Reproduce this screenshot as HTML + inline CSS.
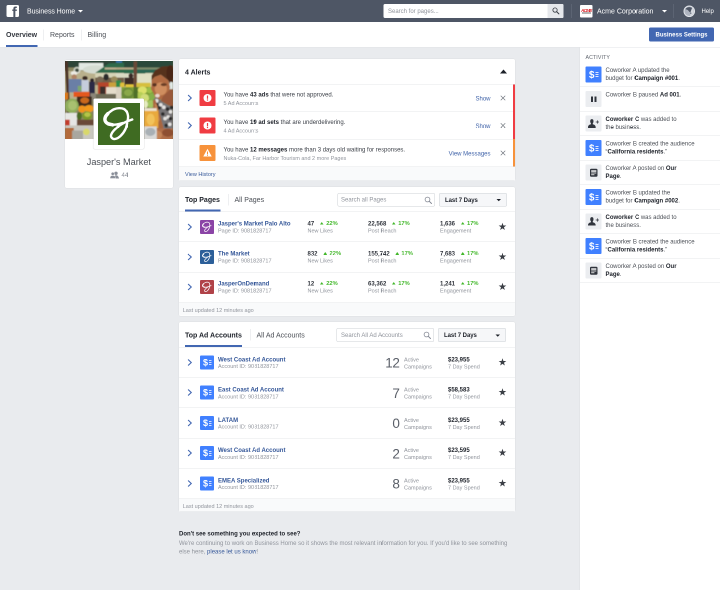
<!DOCTYPE html>
<html><head><meta charset="utf-8"><title>Business Home</title>
<style>
*{box-sizing:border-box;margin:0;padding:0}
html,body{width:720px;height:590px;overflow:hidden;background:#e9ebee}
body{font-family:"Liberation Sans",Arial,sans-serif;color:#1d2129}
#w{position:absolute;left:0;top:0;width:1440px;height:1180px;transform:scale(.5);transform-origin:0 0;will-change:transform;background:#e9ebee;overflow:hidden}
.abs{position:absolute}
.card{position:absolute;background:#fff;border:1px solid #dddfe2;border-radius:4px;overflow:hidden}
.t{position:absolute;white-space:nowrap}
.t b{font-weight:bold;color:#1d2129}
svg{position:absolute;overflow:visible}
</style></head><body><div id="w">
<div class="abs" style="left:0px;top:0px;width:1440px;height:44px;background:#4e5665"></div>
<div class="abs" style="left:12.5px;top:10px;width:25px;height:24px;background:#fff;border-radius:3px;overflow:hidden"><div class="t" style="left:11.5px;top:-0.5px;font-size:29px;line-height:30px;font-weight:bold;color:#4e5665;">f</div></div>
<div class="t" style="left:54px;top:14.1px;font-size:14px;line-height:16.8px;color:#fff;font-weight:normal;letter-spacing:-0.15px">Business Home</div>
<svg style="left:156px;top:20px" width="10" height="5"><path d="M0 0h10l-5 5z" fill="#fff"/></svg>
<div class="abs" style="left:767px;top:8px;width:360px;height:28px;background:#fff;border-radius:3px"></div>
<div class="abs" style="left:1095px;top:8px;width:32px;height:28px;background:#e6e8ec;border-radius:0 3px 3px 0"></div>
<div class="t" style="left:776px;top:14.8px;font-size:12px;line-height:14.4px;color:#90949c;font-weight:normal;">Search for pages...</div>
<svg style="left:1104px;top:14px" width="15.500" height="15.500" viewBox="0 0 18 18"><circle cx="7" cy="7" r="5" fill="none" stroke="#3a3e46" stroke-width="1.900"/><path d="M11 11l5 5" stroke="#3a3e46" stroke-width="2.400" stroke-linecap="round"/></svg>
<div class="abs" style="left:1143px;top:8px;width:1px;height:28px;background:#6a7180"></div>
<div class="abs" style="left:1160px;top:10px;width:25px;height:25px;background:#fff;border-radius:2px"></div>
<div class="t" style="left:1162px;top:15.6px;font-size:9px;line-height:10.8px;color:#d81f26;font-weight:bold;letter-spacing:-1.35px;font-style:italic">ACME</div>
<div class="abs" style="left:1164px;top:25.2px;width:18px;height:1.5px;background:#6b6b6b"></div>
<div class="t" style="left:1194px;top:14.1px;font-size:14px;line-height:16.8px;color:#fff;font-weight:normal;">Acme Corporation</div>
<svg style="left:1324px;top:20px" width="10" height="5"><path d="M0 0h10l-5 5z" fill="#fff"/></svg>
<div class="abs" style="left:1347px;top:8px;width:1px;height:28px;background:#6a7180"></div>
<svg style="left:1366.500px;top:10.500px" width="23" height="23" viewBox="0 0 24 24"><circle cx="12" cy="12" r="11" fill="#aeb4c0" stroke="#e2e5ea" stroke-width="2"/><path d="M4 7.500C7 3 13 2 18 5l-3.500 9.500-2.500-1.500-3-3.500z" fill="#4e5665"/><path d="M18 5c4 3 4.500 9 1.500 13-2 2.500-4.500 3.300-5.500 3l.5-6.500z" fill="#d5d8df"/><path d="M14.500 14.500l2 .5-.5 3-1.800-1z" fill="#4e5665"/></svg>
<div class="t" style="left:1403px;top:14.8px;font-size:12px;line-height:14.4px;color:#fff;font-weight:normal;">Help</div>
<div class="abs" style="left:0px;top:44px;width:1440px;height:51px;background:#fff;border-bottom:1px solid #e1e3e6"></div>
<div class="t" style="left:12px;top:60.6px;font-size:14px;line-height:16.8px;color:#33373f;font-weight:bold;">Overview</div>
<div class="abs" style="left:87px;top:59px;width:1px;height:22px;background:#dddfe2"></div>
<div class="t" style="left:100px;top:60.6px;font-size:14px;line-height:16.8px;color:#4b4f56;font-weight:normal;">Reports</div>
<div class="abs" style="left:163px;top:59px;width:1px;height:22px;background:#dddfe2"></div>
<div class="t" style="left:175px;top:60.6px;font-size:14px;line-height:16.8px;color:#4b4f56;font-weight:normal;">Billing</div>
<div class="abs" style="left:12px;top:90px;width:63px;height:4px;background:#4267b2"></div>
<div class="abs" style="left:1298px;top:55px;width:130px;height:28px;background:#4267b2;border-radius:3px"></div>
<div class="t" style="left:1311px;top:61.8px;font-size:12px;line-height:14.4px;color:#fff;font-weight:bold;">Business Settings</div>
<div class="abs" style="left:1159px;top:95px;width:281px;height:1085px;background:#fff;border-left:1px solid #dddfe2"></div>
<div class="t" style="left:1171px;top:108.2px;font-size:10.5px;line-height:12.6px;color:#5f646d;font-weight:normal;letter-spacing:0.2px">ACTIVITY</div>
<div class="abs" style="left:1171px;top:133px;width:32px;height:32px;background:#4080ff;border-radius:2px"></div>
<div class="t" style="left:1178px;top:138.3px;font-size:19.5px;line-height:23.4px;color:#fff;font-weight:bold;">$</div>
<div class="abs" style="left:1191px;top:144px;width:5.5px;height:2px;background:#dfe8ff"></div>
<div class="abs" style="left:1191px;top:148px;width:5.5px;height:2px;background:#dfe8ff"></div>
<div class="abs" style="left:1191px;top:152px;width:5.5px;height:2px;background:#dfe8ff"></div>
<div class="t" style="left:1211px;top:132.8px;font-size:12px;line-height:14.4px;color:#4b4f56;font-weight:normal;">Coworker A updated the</div>
<div class="t" style="left:1211px;top:148.8px;font-size:12px;line-height:14.4px;color:#4b4f56;font-weight:normal;">budget for <b>Campaign #001</b>.</div>
<div class="abs" style="left:1160px;top:173px;width:280px;height:1px;background:#e5e6e9"></div>
<div class="abs" style="left:1171px;top:182px;width:32px;height:32px;background:#ebedf0;border-radius:2px"></div>
<div class="abs" style="left:1182px;top:192.5px;width:4px;height:11.5px;background:#30343c"></div>
<div class="abs" style="left:1188.5px;top:192.5px;width:4px;height:11.5px;background:#30343c"></div>
<div class="t" style="left:1211px;top:181.8px;font-size:12px;line-height:14.4px;color:#4b4f56;font-weight:normal;">Coworker B paused <b>Ad 001</b>.</div>
<div class="abs" style="left:1160px;top:222px;width:280px;height:1px;background:#e5e6e9"></div>
<div class="abs" style="left:1171px;top:231px;width:32px;height:32px;background:#ebedf0;border-radius:2px"></div>
<svg style="left:1176px;top:238px" width="23.100" height="17.600" viewBox="0 0 21 16"><ellipse cx="7" cy="4.200" rx="3" ry="4" fill="#30343c"/><path d="M5.300 6h3.400v3.500c3.500.8 5.300 2.500 5.300 6h-14c0-3.500 1.800-5.200 5.300-6z" fill="#30343c"/><path d="M17 2.500v6M14 5.500h6" stroke="#30343c" stroke-width="1.300"/></svg>
<div class="t" style="left:1211px;top:230.8px;font-size:12px;line-height:14.4px;color:#4b4f56;font-weight:normal;"><b>Coworker C</b> was added to</div>
<div class="t" style="left:1211px;top:246.8px;font-size:12px;line-height:14.4px;color:#4b4f56;font-weight:normal;">the business.</div>
<div class="abs" style="left:1160px;top:271px;width:280px;height:1px;background:#e5e6e9"></div>
<div class="abs" style="left:1171px;top:280px;width:32px;height:32px;background:#4080ff;border-radius:2px"></div>
<div class="t" style="left:1178px;top:285.3px;font-size:19.5px;line-height:23.4px;color:#fff;font-weight:bold;">$</div>
<div class="abs" style="left:1191px;top:292px;width:5.5px;height:2px;background:#dfe8ff"></div>
<div class="abs" style="left:1191px;top:296px;width:5.5px;height:2px;background:#dfe8ff"></div>
<div class="abs" style="left:1191px;top:300px;width:5.5px;height:2px;background:#dfe8ff"></div>
<div class="t" style="left:1211px;top:279.8px;font-size:12px;line-height:14.4px;color:#4b4f56;font-weight:normal;">Coworker B created the audience</div>
<div class="t" style="left:1211px;top:295.8px;font-size:12px;line-height:14.4px;color:#4b4f56;font-weight:normal;">“<b>California residents</b>.”</div>
<div class="abs" style="left:1160px;top:320px;width:280px;height:1px;background:#e5e6e9"></div>
<div class="abs" style="left:1171px;top:329px;width:32px;height:32px;background:#ebedf0;border-radius:2px"></div>
<svg style="left:1179.5px;top:337.5px" width="15" height="15" viewBox="0 0 14 14"><rect x="0" y="-0.500" width="14" height="15" rx="2.200" fill="#30343c"/><rect x="2.200" y="2.500" width="9.600" height="2.600" fill="#fff"/><rect x="2.200" y="6.700" width="9.600" height="1.500" fill="#fff"/><rect x="2.200" y="10" width="6" height="1.500" fill="#fff"/></svg>
<div class="t" style="left:1211px;top:328.8px;font-size:12px;line-height:14.4px;color:#4b4f56;font-weight:normal;">Coworker A posted on <b>Our</b></div>
<div class="t" style="left:1211px;top:344.8px;font-size:12px;line-height:14.4px;color:#4b4f56;font-weight:normal;"><b>Page</b>.</div>
<div class="abs" style="left:1160px;top:369px;width:280px;height:1px;background:#e5e6e9"></div>
<div class="abs" style="left:1171px;top:378px;width:32px;height:32px;background:#4080ff;border-radius:2px"></div>
<div class="t" style="left:1178px;top:383.3px;font-size:19.5px;line-height:23.4px;color:#fff;font-weight:bold;">$</div>
<div class="abs" style="left:1191px;top:390px;width:5.5px;height:2px;background:#dfe8ff"></div>
<div class="abs" style="left:1191px;top:394px;width:5.5px;height:2px;background:#dfe8ff"></div>
<div class="abs" style="left:1191px;top:398px;width:5.5px;height:2px;background:#dfe8ff"></div>
<div class="t" style="left:1211px;top:377.8px;font-size:12px;line-height:14.4px;color:#4b4f56;font-weight:normal;">Coworker B updated the</div>
<div class="t" style="left:1211px;top:393.8px;font-size:12px;line-height:14.4px;color:#4b4f56;font-weight:normal;">budget for <b>Campaign #002</b>.</div>
<div class="abs" style="left:1160px;top:418px;width:280px;height:1px;background:#e5e6e9"></div>
<div class="abs" style="left:1171px;top:427px;width:32px;height:32px;background:#ebedf0;border-radius:2px"></div>
<svg style="left:1176px;top:434px" width="23.100" height="17.600" viewBox="0 0 21 16"><ellipse cx="7" cy="4.200" rx="3" ry="4" fill="#30343c"/><path d="M5.300 6h3.400v3.500c3.500.8 5.300 2.500 5.300 6h-14c0-3.500 1.800-5.200 5.300-6z" fill="#30343c"/><path d="M17 2.500v6M14 5.500h6" stroke="#30343c" stroke-width="1.300"/></svg>
<div class="t" style="left:1211px;top:426.8px;font-size:12px;line-height:14.4px;color:#4b4f56;font-weight:normal;"><b>Coworker C</b> was added to</div>
<div class="t" style="left:1211px;top:442.8px;font-size:12px;line-height:14.4px;color:#4b4f56;font-weight:normal;">the business.</div>
<div class="abs" style="left:1160px;top:467px;width:280px;height:1px;background:#e5e6e9"></div>
<div class="abs" style="left:1171px;top:476px;width:32px;height:32px;background:#4080ff;border-radius:2px"></div>
<div class="t" style="left:1178px;top:481.3px;font-size:19.5px;line-height:23.4px;color:#fff;font-weight:bold;">$</div>
<div class="abs" style="left:1191px;top:488px;width:5.5px;height:2px;background:#dfe8ff"></div>
<div class="abs" style="left:1191px;top:492px;width:5.5px;height:2px;background:#dfe8ff"></div>
<div class="abs" style="left:1191px;top:496px;width:5.5px;height:2px;background:#dfe8ff"></div>
<div class="t" style="left:1211px;top:475.8px;font-size:12px;line-height:14.4px;color:#4b4f56;font-weight:normal;">Coworker B created the audience</div>
<div class="t" style="left:1211px;top:491.8px;font-size:12px;line-height:14.4px;color:#4b4f56;font-weight:normal;">“<b>California residents</b>.”</div>
<div class="abs" style="left:1160px;top:516px;width:280px;height:1px;background:#e5e6e9"></div>
<div class="abs" style="left:1171px;top:525px;width:32px;height:32px;background:#ebedf0;border-radius:2px"></div>
<svg style="left:1179.5px;top:533.5px" width="15" height="15" viewBox="0 0 14 14"><rect x="0" y="-0.500" width="14" height="15" rx="2.200" fill="#30343c"/><rect x="2.200" y="2.500" width="9.600" height="2.600" fill="#fff"/><rect x="2.200" y="6.700" width="9.600" height="1.500" fill="#fff"/><rect x="2.200" y="10" width="6" height="1.500" fill="#fff"/></svg>
<div class="t" style="left:1211px;top:524.8px;font-size:12px;line-height:14.4px;color:#4b4f56;font-weight:normal;">Coworker A posted on <b>Our</b></div>
<div class="t" style="left:1211px;top:540.8px;font-size:12px;line-height:14.4px;color:#4b4f56;font-weight:normal;"><b>Page</b>.</div>
<div class="abs" style="left:1160px;top:565px;width:280px;height:1px;background:#e5e6e9"></div>
<div class="card" style="left:129px;top:119px;width:218px;height:258px">
<div class="abs" style="left:0;top:2px;width:216px;height:156px;background:#6b6a45;overflow:hidden"><svg width="216" height="156" viewBox="0 0 108 78" preserveAspectRatio="none"><defs><filter id="bl" x="-5%" y="-5%" width="110%" height="110%"><feGaussianBlur stdDeviation="0.55"/></filter><clipPath id="cp"><rect width="108" height="78"/></clipPath></defs><g clip-path="url(#cp)"><g filter="url(#bl)"><rect x="0" y="0" width="108" height="78" fill="#8a8660"/><rect x="-1.0" y="9.9" width="60.0" height="28.5" fill="#b9b08c"/><rect x="51.0" y="11.2" width="57.0" height="14.9" fill="#cfcdb0"/><rect x="-1.0" y="-1.0" width="60.0" height="7.5" fill="#2f4538"/><rect x="51.0" y="-1.0" width="57.0" height="7.9" fill="#2b4a3a"/><rect x="13.9" y="2.0" width="24.4" height="7.2" fill="#e3e9e3"/><ellipse cx="30.2" cy="8.5" rx="12.2" ry="4.1" fill="#d5dcd2"/><polygon points="30.2,11.9 43.8,2.4 59.0,1.7 59.0,11.9" fill="#2f6a4c"/><rect x="39.7" y="6.5" width="19.3" height="2.0" fill="#b9ad8e"/><rect x="51.0" y="6.5" width="44.8" height="2.0" fill="#b3a685"/><rect x="51.0" y="8.5" width="29.2" height="4.1" fill="#2a6b4c"/><rect x="51.0" y="0.1" width="6.1" height="1.6" fill="#3a78b5"/><rect x="72.0" y="6.5" width="23.7" height="2.0" fill="#7c8a6a"/><rect x="72.0" y="8.5" width="19.7" height="3.4" fill="#2c6652"/><rect x="30.2" y="11.9" width="28.8" height="6.1" fill="#d6d3b6"/><rect x="51.0" y="12.3" width="17.6" height="5.7" fill="#d9dac4"/><rect x="72.0" y="12.6" width="14.9" height="10.2" fill="#dfe0c4"/><rect x="104.6" y="19.4" width="3.4" height="8.8" fill="#dfe8e6"/><polygon points="-0.2,0.1 2.8,0.1 6.6,79.1 3.6,79.1" fill="#4c3226"/><ellipse cx="12.0" cy="9.3" rx="3.5" ry="3.5" fill="#dfe3dc" opacity="0.8"/><ellipse cx="12.0" cy="9.3" rx="1.9" ry="1.9" fill="#3c4a3c"/><ellipse cx="9.0" cy="12.2" rx="3.3" ry="2.0" fill="#ecebe4"/><ellipse cx="9.2" cy="16.0" rx="2.7" ry="2.7" fill="#b08465"/><rect x="3.7" y="18.0" width="12.9" height="13.3" fill="#6a7fa6"/><rect x="12.8" y="24.8" width="7.3" height="5.4" fill="#7fa86c"/><ellipse cx="20.0" cy="17.2" rx="2.7" ry="2.2" fill="#3a2a22"/><rect x="16.6" y="19.1" width="7.1" height="11.4" fill="#c5ccdb"/><ellipse cx="27.1" cy="19.4" rx="2.0" ry="2.0" fill="#2a2228"/><rect x="24.1" y="20.7" width="5.8" height="17.6" fill="#2c2a45"/><rect x="30.2" y="16.6" width="28.8" height="7.5" fill="#6f5f48"/><ellipse cx="35.0" cy="18.3" rx="3.4" ry="3.1" fill="#7a6a55"/><ellipse cx="41.1" cy="16.0" rx="2.7" ry="3.4" fill="#2c2a2a"/><ellipse cx="49.2" cy="18.3" rx="3.4" ry="3.1" fill="#9a8a5a"/><rect x="32.9" y="21.4" width="13.6" height="11.5" fill="#b5452b"/><rect x="35.0" y="25.5" width="5.4" height="10.2" fill="#3a2f2c"/><rect x="41.1" y="26.1" width="17.9" height="8.4" fill="#e4dccb"/><rect x="43.8" y="21.4" width="15.2" height="4.7" fill="#c9a13a"/><rect x="52.6" y="19.4" width="3.4" height="6.8" fill="#2f8a4a"/><rect x="29.9" y="32.9" width="29.0" height="5.4" fill="#6d6a55"/><rect x="25.5" y="32.2" width="5.4" height="7.5" fill="#8b8578"/><rect x="8.5" y="30.9" width="16.0" height="5.0" fill="#e5591c"/><rect x="11.9" y="35.6" width="14.9" height="9.5" fill="#3d2a1c"/><ellipse cx="19.7" cy="39.4" rx="4.4" ry="3.1" fill="#c9671f"/><ellipse cx="17.0" cy="48.1" rx="3.7" ry="3.6" fill="#f0941c"/><ellipse cx="24.1" cy="47.6" rx="4.7" ry="3.6" fill="#f29a1e"/><rect x="-1.0" y="31.6" width="4.1" height="6.8" fill="#d9791f"/><ellipse cx="6.9" cy="44.9" rx="6.8" ry="7.3" fill="#8fae5c"/><ellipse cx="7.5" cy="44.5" rx="4.4" ry="4.7" fill="#a9c06f"/><rect x="-0.2" y="51.9" width="12.2" height="15.6" fill="#e6e6e4"/><rect x="0.1" y="58.7" width="4.6" height="8.1" fill="#c23a2b"/><ellipse cx="14.3" cy="55.0" rx="2.6" ry="4.0" fill="#4b6b28"/><ellipse cx="22.1" cy="54.7" rx="5.0" ry="4.4" fill="#7c9a2a"/><ellipse cx="22.4" cy="53.6" rx="3.1" ry="2.4" fill="#b5c548"/><rect x="11.9" y="58.7" width="16.7" height="5.7" fill="#6b4a38"/><rect x="0.1" y="64.4" width="28.5" height="14.7" fill="#c9c7bf"/><rect x="0.1" y="66.8" width="8.7" height="12.2" fill="#b36a3a"/><ellipse cx="21.4" cy="70.9" rx="3.4" ry="3.4" fill="#d9d86a"/><rect x="7.1" y="69.6" width="10.9" height="9.5" fill="#a9a79f"/><rect x="68.6" y="0.4" width="3.4" height="37.6" fill="#6a4a38"/><ellipse cx="65.9" cy="14.8" rx="2.4" ry="2.5" fill="#3a2a25"/><rect x="59.4" y="16.6" width="9.2" height="8.8" fill="#3b2b27"/><rect x="51.0" y="19.4" width="4.1" height="6.8" fill="#2f8a4a"/><rect x="55.1" y="22.1" width="4.3" height="4.1" fill="#e0c13a"/><rect x="60.5" y="23.4" width="8.1" height="4.3" fill="#e6c63a"/><rect x="71.4" y="21.8" width="14.2" height="4.3" fill="#d6bf3c"/><rect x="51.0" y="26.1" width="5.7" height="11.8" fill="#d9d1c1"/><rect x="56.4" y="26.1" width="33.9" height="20.4" fill="#7f9f38"/><ellipse cx="62.5" cy="32.6" rx="6.1" ry="5.8" fill="#6a8a3a"/><ellipse cx="63.2" cy="31.6" rx="4.1" ry="3.4" fill="#8aa848"/><ellipse cx="77.5" cy="29.2" rx="4.7" ry="3.7" fill="#dbe16a"/><ellipse cx="84.6" cy="29.2" rx="3.1" ry="3.1" fill="#9cbf4a"/><ellipse cx="75.1" cy="34.3" rx="3.7" ry="3.4" fill="#b7cf58"/><ellipse cx="79.8" cy="37.0" rx="4.4" ry="4.1" fill="#cfdc78"/><ellipse cx="87.0" cy="35.6" rx="3.4" ry="3.4" fill="#86b04a"/><ellipse cx="85.9" cy="42.9" rx="3.7" ry="3.9" fill="#a3c660"/><ellipse cx="80.5" cy="43.4" rx="2.4" ry="3.7" fill="#e6ecc0"/><rect x="68.6" y="26.1" width="4.1" height="11.5" fill="#4f6f2a"/><polygon points="86.5,19.4 86.5,14.6 90.3,9.2 97.1,5.5 103.2,5.1 105.3,7.1 106.9,4.7 108.0,5.1 108.0,21.4 105.3,20.7 104.6,22.7 103.2,19.4 95.8,13.7 89.7,16.0" fill="#56301d"/><ellipse cx="105.3" cy="12.4" rx="3.8" ry="8.3" fill="#4a2616"/><polygon points="86.5,19.4 89.7,16.0 95.8,13.7 103.2,19.4 105.0,26.1 103.2,32.9 98.5,37.7 93.7,38.6 90.3,37.0 88.3,31.6 86.0,28.2 86.5,23.4" fill="#b06a42"/><ellipse cx="95.8" cy="27.8" rx="6.1" ry="6.4" fill="#cf8d5e"/><ellipse cx="89.5" cy="23.8" rx="2.2" ry="1.7" fill="#5a3322"/><ellipse cx="98.8" cy="23.6" rx="3.1" ry="1.5" fill="#6a3c26"/><ellipse cx="92.4" cy="34.7" rx="2.3" ry="1.8" fill="#ead8cf"/><polygon points="97.8,35.6 105.3,28.2 108.0,28.2 108.0,45.8 102.6,43.8 95.8,39.7" fill="#99583a"/><polygon points="88.7,37.7 91.7,36.3 96.5,40.4 103.2,44.5 108.0,45.8 108.0,67.5 97.8,67.5 94.4,53.3 89.7,43.8" fill="#777577"/><ellipse cx="91.7" cy="39.7" rx="1.8" ry="1.8" fill="#e4e2e0"/><ellipse cx="98.8" cy="46.2" rx="1.8" ry="1.8" fill="#e4e2e0"/><ellipse cx="105.5" cy="50.8" rx="1.8" ry="1.8" fill="#e4e2e0"/><ellipse cx="100.1" cy="57.6" rx="1.8" ry="1.8" fill="#e4e2e0"/><ellipse cx="104.7" cy="63.3" rx="1.8" ry="1.8" fill="#e4e2e0"/><ellipse cx="95.8" cy="43.8" rx="1.8" ry="1.8" fill="#e4e2e0"/><ellipse cx="103.2" cy="56.0" rx="1.8" ry="1.8" fill="#e4e2e0"/><ellipse cx="94.1" cy="46.8" rx="1.8" ry="1.8" fill="#2b2929"/><ellipse cx="102.6" cy="48.1" rx="1.8" ry="1.8" fill="#2b2929"/><ellipse cx="97.8" cy="53.0" rx="1.8" ry="1.8" fill="#2b2929"/><ellipse cx="105.5" cy="57.6" rx="1.8" ry="1.8" fill="#2b2929"/><ellipse cx="101.2" cy="64.4" rx="1.8" ry="1.8" fill="#2b2929"/><ellipse cx="91.7" cy="43.8" rx="1.8" ry="1.8" fill="#2b2929"/><ellipse cx="106.6" cy="46.5" rx="1.8" ry="1.8" fill="#2b2929"/><polygon points="87.9,39.7 90.3,38.3 94.4,51.9 98.5,66.8 91.7,75.0 87.6,72.9 89.7,60.1 88.3,50.6" fill="#a8663f"/><polygon points="89.7,42.4 91.7,43.8 94.7,58.7 92.4,62.8" fill="#c48452"/><rect x="86.0" y="67.5" width="22.0" height="11.5" fill="#b06e48"/><ellipse cx="102.9" cy="71.8" rx="5.8" ry="3.9" fill="#8e4f33"/><ellipse cx="92.0" cy="74.0" rx="5.1" ry="4.4" fill="#c38458"/><rect x="79.2" y="49.5" width="14.1" height="17.4" fill="#e9a93d"/><rect x="79.2" y="47.2" width="12.5" height="2.7" fill="#ece4d2"/><ellipse cx="85.6" cy="58.4" rx="4.1" ry="5.8" fill="#f2c25a"/><rect x="79.0" y="65.5" width="12.8" height="13.6" fill="#d9d9d8"/><ellipse cx="85.3" cy="70.9" rx="5.1" ry="4.1" fill="#a9b0b5"/></g></g></svg></div>
</div>
<div class="abs" style="left:187px;top:197px;width:101px;height:101px;background:#fff;border-radius:3px;box-shadow:0 0 2px rgba(0,0,0,.35)"></div>
<div class="abs" style="left:196px;top:206px;width:84px;height:84px;background:#3f6b22"></div>
<svg style="left:196px;top:206px" width="84" height="84" viewBox="0 0 84 84"><path d="M49.5 40.0C47.2 40.5 40.2 42.7 36.0 43.2C31.8 43.7 27.4 43.7 24.0 43.0C20.6 42.3 17.2 40.7 15.5 39.0C13.8 37.3 13.3 35.1 13.5 32.7C13.7 30.3 14.8 26.9 16.5 24.5C18.2 22.1 20.9 20.0 23.5 18.0C26.1 16.0 28.9 13.8 32.0 12.5C35.1 11.2 38.7 10.4 42.0 10.3C45.3 10.2 49.4 10.7 52.0 12.0C54.6 13.3 56.5 15.8 57.8 18.0C59.1 20.2 59.7 22.9 60.0 25.5C60.3 28.1 60.4 29.2 59.6 33.6C58.8 38.0 57.4 46.6 55.0 52.0C52.6 57.4 48.5 62.7 45.0 66.0C41.5 69.3 37.0 71.5 34.0 72.0C31.0 72.5 28.2 70.5 27.0 69.0C25.8 67.5 25.7 65.4 26.5 63.0C27.3 60.6 29.2 57.6 32.0 54.6C34.8 51.6 39.2 47.9 43.2 45.1C47.2 42.3 51.8 39.6 56.0 37.6C60.2 35.6 66.4 33.8 68.5 33.0" fill="none" stroke="#fff" stroke-width="4.8" stroke-linecap="round" stroke-linejoin="round"/><path d="M29.0 43.6C27.5 43.2 22.3 42.6 20.0 41.5C17.7 40.4 16.0 38.6 15.0 37.0C14.0 35.4 13.7 33.8 13.8 32.0C13.9 30.2 14.6 28.2 15.5 26.5C16.4 24.8 18.8 22.3 19.5 21.5" fill="none" stroke="#fff" stroke-width="7.0" stroke-linecap="round" stroke-linejoin="round"/></svg>
<div class="t" style="left:173.5px;top:312.5px;font-size:18.3px;line-height:22.0px;color:#4b4f56;font-weight:normal;">Jasper's Market</div>
<div class="t" style="left:243px;top:343.3px;font-size:12px;line-height:14.4px;color:#90949c;font-weight:normal;">44</div>
<svg style="left:220px;top:343px" width="18" height="14" viewBox="0 0 18 14"><circle cx="12" cy="3.6" r="3.4" fill="#8a8f99"/><path d="M9.5 14c-.5-5 .5-6.500 2.500-6.500s5 1 6 6.500z" fill="#8a8f99"/><circle cx="5.500" cy="4.600" r="3.200" fill="#8a8f99" stroke="#fff" stroke-width=".8"/><path d="M0 14c0-4.500 2-6 5.500-6s5.500 1.500 5.500 6z" fill="#8a8f99" stroke="#fff" stroke-width=".8"/></svg>
<div class="card" style="left:357px;top:117px;width:674px;height:245px"></div>
<div class="t" style="left:370px;top:136.1px;font-size:14px;line-height:16.8px;color:#1d2129;font-weight:bold;">4 Alerts</div>
<svg style="left:1000px;top:139px" width="14" height="8"><path d="M0 8h14l-7-8z" fill="#1d2129"/></svg>
<div class="abs" style="left:358px;top:168px;width:672px;height:1px;background:#e5e6e9"></div>
<svg style="left:374.5px;top:189px" width="9" height="14"><path d="M1.200 1l6.300 6-6.300 6" fill="none" stroke="#4267b2" stroke-width="2.2"/></svg>
<div class="abs" style="left:399px;top:180px;width:32px;height:32px;background:#f03c42;border-radius:2px"></div>
<svg style="left:407px;top:188px" width="16" height="16"><circle cx="8" cy="8" r="8" fill="#fff"/><rect x="6.8" y="3" width="2.4" height="6.5" fill="#f03c42"/><rect x="6.8" y="10.8" width="2.4" height="2.4" fill="#f03c42"/></svg>
<div class="t" style="left:447px;top:182.3px;font-size:12px;line-height:14.4px;color:#3c4048;font-weight:normal;">You have <b>43 ads</b> that were not approved.</div>
<div class="t" style="left:447px;top:199.9px;font-size:11px;line-height:13.2px;color:#90949c;font-weight:normal;">5 Ad Accounts</div>
<div class="t" style="right:459px;top:190.1px;font-size:12px;line-height:14.4px;color:#3f62a8;font-weight:normal;">Show</div>
<svg style="left:1001px;top:191px" width="10" height="10"><path d="M0.5 0.5l9 9M9.5 0.5l-9 9" stroke="#6c717a" stroke-width="1.25"/></svg>
<div class="abs" style="left:1026px;top:169px;width:4px;height:55px;background:#f03c42"></div>
<div class="abs" style="left:358px;top:223px;width:672px;height:1px;background:#e5e6e9"></div>
<svg style="left:374.5px;top:244px" width="9" height="14"><path d="M1.200 1l6.300 6-6.300 6" fill="none" stroke="#4267b2" stroke-width="2.2"/></svg>
<div class="abs" style="left:399px;top:235px;width:32px;height:32px;background:#f03c42;border-radius:2px"></div>
<svg style="left:407px;top:243px" width="16" height="16"><circle cx="8" cy="8" r="8" fill="#fff"/><rect x="6.8" y="3" width="2.4" height="6.5" fill="#f03c42"/><rect x="6.8" y="10.8" width="2.4" height="2.4" fill="#f03c42"/></svg>
<div class="t" style="left:447px;top:237.3px;font-size:12px;line-height:14.4px;color:#3c4048;font-weight:normal;">You have <b>19 ad sets</b> that are underdelivering.</div>
<div class="t" style="left:447px;top:254.9px;font-size:11px;line-height:13.2px;color:#90949c;font-weight:normal;">4 Ad Accounts</div>
<div class="t" style="right:459px;top:245.1px;font-size:12px;line-height:14.4px;color:#3f62a8;font-weight:normal;">Show</div>
<svg style="left:1001px;top:246px" width="10" height="10"><path d="M0.5 0.5l9 9M9.5 0.5l-9 9" stroke="#6c717a" stroke-width="1.25"/></svg>
<div class="abs" style="left:1026px;top:223px;width:4px;height:55px;background:#f03c42"></div>
<div class="abs" style="left:358px;top:278px;width:672px;height:1px;background:#e5e6e9"></div>
<div class="abs" style="left:399px;top:290px;width:32px;height:32px;background:#f7923b;border-radius:2px"></div>
<svg style="left:406px;top:297px" width="18" height="17"><path d="M9 0.5L17.5 16H0.5z" fill="#fff"/><rect x="8" y="6" width="2" height="5.5" fill="#f7923b"/><rect x="8" y="12.5" width="2" height="2" fill="#f7923b"/></svg>
<div class="t" style="left:447px;top:292.3px;font-size:12px;line-height:14.4px;color:#3c4048;font-weight:normal;">You have <b>12 messages</b> more than 3 days old waiting for responses.</div>
<div class="t" style="left:447px;top:309.9px;font-size:11px;line-height:13.2px;color:#90949c;font-weight:normal;">Nuka-Cola, Far Harbor Tourism and 2 more Pages</div>
<div class="t" style="right:459px;top:300.1px;font-size:12px;line-height:14.4px;color:#3f62a8;font-weight:normal;">View Messages</div>
<svg style="left:1001px;top:301px" width="10" height="10"><path d="M0.5 0.5l9 9M9.5 0.5l-9 9" stroke="#6c717a" stroke-width="1.25"/></svg>
<div class="abs" style="left:1026px;top:278px;width:4px;height:55px;background:#f7923b"></div>
<div class="abs" style="left:358px;top:333px;width:672px;height:28px;background:#f9fafb;border-top:1px solid #e5e6e9"></div>
<div class="t" style="left:370px;top:341.9px;font-size:11px;line-height:13.2px;color:#365899;font-weight:normal;">View History</div>
<div class="card" style="left:357px;top:372.8px;width:674px;height:259.9px"></div>
<div class="t" style="left:370px;top:390.9px;font-size:14px;line-height:16.8px;color:#1d2129;font-weight:bold;">Top Pages</div>
<div class="abs" style="left:457px;top:387.8px;width:1px;height:23px;background:#dddfe2"></div>
<div class="t" style="left:469px;top:390.9px;font-size:14px;line-height:16.8px;color:#4b4f56;font-weight:normal;">All Pages</div>
<div class="abs" style="left:370px;top:419.40000000000003px;width:70.5px;height:4px;background:#4267b2"></div>
<div class="abs" style="left:674.5px;top:385.8px;width:195.5px;height:27.5px;background:#fff;border:1px solid #ccd0d5;border-radius:3px"></div>
<div class="t" style="left:682px;top:392.1px;font-size:12px;line-height:14.4px;color:#90949c;font-weight:normal;">Search all Pages</div>
<svg style="left:849px;top:392.8px" width="15" height="15" viewBox="0 0 15 15"><circle cx="6" cy="6" r="4.800" fill="none" stroke="#7f8490" stroke-width="1.5"/><path d="M9.600 9.600l4.400 4.400" stroke="#7f8490" stroke-width="1.8" stroke-linecap="round"/></svg>
<div class="abs" style="left:878px;top:385.8px;width:136px;height:27.5px;background:#f6f7f9;border:1px solid #ccd0d5;border-radius:3px"></div>
<div class="t" style="left:890px;top:392.6px;font-size:12px;line-height:14.4px;color:#1d2129;font-weight:bold;letter-spacing:-0.1px">Last 7 Days</div>
<svg style="left:993px;top:398.3px" width="9" height="4.500"><path d="M0 0h9l-4.500 4.500z" fill="#1d2129"/></svg>
<div class="abs" style="left:358px;top:423.4px;width:672px;height:1px;background:#e5e6e9"></div>
<svg style="left:374.5px;top:447px" width="9" height="14"><path d="M1.200 1l6.300 6-6.300 6" fill="none" stroke="#4267b2" stroke-width="2.2"/></svg>
<div class="abs" style="left:400px;top:440px;width:28px;height:28px;background:#8b44a6;border-radius:2px"></div>
<svg style="left:401px;top:441px" width="26" height="26" viewBox="0 0 84 84"><path d="M49.5 40.0C47.2 40.5 40.2 42.7 36.0 43.2C31.8 43.7 27.4 43.7 24.0 43.0C20.6 42.3 17.2 40.7 15.5 39.0C13.8 37.3 13.3 35.1 13.5 32.7C13.7 30.3 14.8 26.9 16.5 24.5C18.2 22.1 20.9 20.0 23.5 18.0C26.1 16.0 28.9 13.8 32.0 12.5C35.1 11.2 38.7 10.4 42.0 10.3C45.3 10.2 49.4 10.7 52.0 12.0C54.6 13.3 56.5 15.8 57.8 18.0C59.1 20.2 59.7 22.9 60.0 25.5C60.3 28.1 60.4 29.2 59.6 33.6C58.8 38.0 57.4 46.6 55.0 52.0C52.6 57.4 48.5 62.7 45.0 66.0C41.5 69.3 37.0 71.5 34.0 72.0C31.0 72.5 28.2 70.5 27.0 69.0C25.8 67.5 25.7 65.4 26.5 63.0C27.3 60.6 29.2 57.6 32.0 54.6C34.8 51.6 39.2 47.9 43.2 45.1C47.2 42.3 51.8 39.6 56.0 37.6C60.2 35.6 66.4 33.8 68.5 33.0" fill="none" stroke="#fff" stroke-width="4.6" stroke-linecap="round" stroke-linejoin="round"/><path d="M29.0 43.6C27.5 43.2 22.3 42.6 20.0 41.5C17.7 40.4 16.0 38.6 15.0 37.0C14.0 35.4 13.7 33.8 13.8 32.0C13.9 30.2 14.6 28.2 15.5 26.5C16.4 24.8 18.8 22.3 19.5 21.5" fill="none" stroke="#fff" stroke-width="6.8" stroke-linecap="round" stroke-linejoin="round"/></svg>
<div class="t" style="left:436px;top:440.1px;font-size:12px;line-height:14.4px;color:#365899;font-weight:bold;">Jasper's Market Palo Alto</div>
<div class="t" style="left:436px;top:454.7px;font-size:11px;line-height:13.2px;color:#90949c;font-weight:normal;">Page ID: 9081828717</div>
<div class="t" style="left:615px;top:440.1px;font-size:12px;line-height:14.4px;color:#2f333b;font-weight:bold;">47</div>
<svg style="left:640.4px;top:444.3px" width="7" height="5"><path d="M0 5h7l-3.500-5z" fill="#42b72a"/></svg>
<div class="t" style="left:652.4px;top:440.4px;font-size:11.5px;line-height:13.8px;color:#42b72a;font-weight:bold;">22%</div>
<div class="t" style="left:615px;top:454.7px;font-size:11px;line-height:13.2px;color:#90949c;font-weight:normal;">New Likes</div>
<div class="t" style="left:736px;top:440.1px;font-size:12px;line-height:14.4px;color:#2f333b;font-weight:bold;">22,568</div>
<svg style="left:784.4px;top:444.3px" width="7" height="5"><path d="M0 5h7l-3.500-5z" fill="#42b72a"/></svg>
<div class="t" style="left:796.4px;top:440.4px;font-size:11.5px;line-height:13.8px;color:#42b72a;font-weight:bold;">17%</div>
<div class="t" style="left:736px;top:454.7px;font-size:11px;line-height:13.2px;color:#90949c;font-weight:normal;">Post Reach</div>
<div class="t" style="left:880px;top:440.1px;font-size:12px;line-height:14.4px;color:#2f333b;font-weight:bold;">1,636</div>
<svg style="left:922.0px;top:444.3px" width="7" height="5"><path d="M0 5h7l-3.500-5z" fill="#42b72a"/></svg>
<div class="t" style="left:934.0px;top:440.4px;font-size:11.5px;line-height:13.8px;color:#42b72a;font-weight:bold;">17%</div>
<div class="t" style="left:880px;top:454.7px;font-size:11px;line-height:13.2px;color:#90949c;font-weight:normal;">Engagement</div>
<div class="t" style="left:996px;top:441.0px;font-size:20px;line-height:24px;color:#3b3f46;font-family:'DejaVu Sans',sans-serif">★</div>
<div class="abs" style="left:358px;top:483px;width:672px;height:1px;background:#e5e6e9"></div>
<svg style="left:374.5px;top:507px" width="9" height="14"><path d="M1.200 1l6.300 6-6.300 6" fill="none" stroke="#4267b2" stroke-width="2.2"/></svg>
<div class="abs" style="left:400px;top:500px;width:28px;height:28px;background:#2c5f99;border-radius:2px"></div>
<svg style="left:401px;top:501px" width="26" height="26" viewBox="0 0 84 84"><path d="M49.5 40.0C47.2 40.5 40.2 42.7 36.0 43.2C31.8 43.7 27.4 43.7 24.0 43.0C20.6 42.3 17.2 40.7 15.5 39.0C13.8 37.3 13.3 35.1 13.5 32.7C13.7 30.3 14.8 26.9 16.5 24.5C18.2 22.1 20.9 20.0 23.5 18.0C26.1 16.0 28.9 13.8 32.0 12.5C35.1 11.2 38.7 10.4 42.0 10.3C45.3 10.2 49.4 10.7 52.0 12.0C54.6 13.3 56.5 15.8 57.8 18.0C59.1 20.2 59.7 22.9 60.0 25.5C60.3 28.1 60.4 29.2 59.6 33.6C58.8 38.0 57.4 46.6 55.0 52.0C52.6 57.4 48.5 62.7 45.0 66.0C41.5 69.3 37.0 71.5 34.0 72.0C31.0 72.5 28.2 70.5 27.0 69.0C25.8 67.5 25.7 65.4 26.5 63.0C27.3 60.6 29.2 57.6 32.0 54.6C34.8 51.6 39.2 47.9 43.2 45.1C47.2 42.3 51.8 39.6 56.0 37.6C60.2 35.6 66.4 33.8 68.5 33.0" fill="none" stroke="#fff" stroke-width="4.6" stroke-linecap="round" stroke-linejoin="round"/><path d="M29.0 43.6C27.5 43.2 22.3 42.6 20.0 41.5C17.7 40.4 16.0 38.6 15.0 37.0C14.0 35.4 13.7 33.8 13.8 32.0C13.9 30.2 14.6 28.2 15.5 26.5C16.4 24.8 18.8 22.3 19.5 21.5" fill="none" stroke="#fff" stroke-width="6.8" stroke-linecap="round" stroke-linejoin="round"/></svg>
<div class="t" style="left:436px;top:500.1px;font-size:12px;line-height:14.4px;color:#365899;font-weight:bold;">The Market</div>
<div class="t" style="left:436px;top:514.7px;font-size:11px;line-height:13.2px;color:#90949c;font-weight:normal;">Page ID: 9081828717</div>
<div class="t" style="left:615px;top:500.1px;font-size:12px;line-height:14.4px;color:#2f333b;font-weight:bold;">832</div>
<svg style="left:647.1px;top:504.3px" width="7" height="5"><path d="M0 5h7l-3.500-5z" fill="#42b72a"/></svg>
<div class="t" style="left:659.1px;top:500.4px;font-size:11.5px;line-height:13.8px;color:#42b72a;font-weight:bold;">22%</div>
<div class="t" style="left:615px;top:514.7px;font-size:11px;line-height:13.2px;color:#90949c;font-weight:normal;">New Likes</div>
<div class="t" style="left:736px;top:500.1px;font-size:12px;line-height:14.4px;color:#2f333b;font-weight:bold;">155,742</div>
<svg style="left:790.8px;top:504.3px" width="7" height="5"><path d="M0 5h7l-3.500-5z" fill="#42b72a"/></svg>
<div class="t" style="left:802.8px;top:500.4px;font-size:11.5px;line-height:13.8px;color:#42b72a;font-weight:bold;">17%</div>
<div class="t" style="left:736px;top:514.7px;font-size:11px;line-height:13.2px;color:#90949c;font-weight:normal;">Post Reach</div>
<div class="t" style="left:880px;top:500.1px;font-size:12px;line-height:14.4px;color:#2f333b;font-weight:bold;">7,683</div>
<svg style="left:922.0px;top:504.3px" width="7" height="5"><path d="M0 5h7l-3.500-5z" fill="#42b72a"/></svg>
<div class="t" style="left:934.0px;top:500.4px;font-size:11.5px;line-height:13.8px;color:#42b72a;font-weight:bold;">17%</div>
<div class="t" style="left:880px;top:514.7px;font-size:11px;line-height:13.2px;color:#90949c;font-weight:normal;">Engagement</div>
<div class="t" style="left:996px;top:501.0px;font-size:20px;line-height:24px;color:#3b3f46;font-family:'DejaVu Sans',sans-serif">★</div>
<div class="abs" style="left:358px;top:545px;width:672px;height:1px;background:#e5e6e9"></div>
<svg style="left:374.5px;top:567px" width="9" height="14"><path d="M1.200 1l6.300 6-6.300 6" fill="none" stroke="#4267b2" stroke-width="2.2"/></svg>
<div class="abs" style="left:400px;top:560px;width:28px;height:28px;background:#b04248;border-radius:2px"></div>
<svg style="left:401px;top:561px" width="26" height="26" viewBox="0 0 84 84"><path d="M49.5 40.0C47.2 40.5 40.2 42.7 36.0 43.2C31.8 43.7 27.4 43.7 24.0 43.0C20.6 42.3 17.2 40.7 15.5 39.0C13.8 37.3 13.3 35.1 13.5 32.7C13.7 30.3 14.8 26.9 16.5 24.5C18.2 22.1 20.9 20.0 23.5 18.0C26.1 16.0 28.9 13.8 32.0 12.5C35.1 11.2 38.7 10.4 42.0 10.3C45.3 10.2 49.4 10.7 52.0 12.0C54.6 13.3 56.5 15.8 57.8 18.0C59.1 20.2 59.7 22.9 60.0 25.5C60.3 28.1 60.4 29.2 59.6 33.6C58.8 38.0 57.4 46.6 55.0 52.0C52.6 57.4 48.5 62.7 45.0 66.0C41.5 69.3 37.0 71.5 34.0 72.0C31.0 72.5 28.2 70.5 27.0 69.0C25.8 67.5 25.7 65.4 26.5 63.0C27.3 60.6 29.2 57.6 32.0 54.6C34.8 51.6 39.2 47.9 43.2 45.1C47.2 42.3 51.8 39.6 56.0 37.6C60.2 35.6 66.4 33.8 68.5 33.0" fill="none" stroke="#fff" stroke-width="4.6" stroke-linecap="round" stroke-linejoin="round"/><path d="M29.0 43.6C27.5 43.2 22.3 42.6 20.0 41.5C17.7 40.4 16.0 38.6 15.0 37.0C14.0 35.4 13.7 33.8 13.8 32.0C13.9 30.2 14.6 28.2 15.5 26.5C16.4 24.8 18.8 22.3 19.5 21.5" fill="none" stroke="#fff" stroke-width="6.8" stroke-linecap="round" stroke-linejoin="round"/></svg>
<div class="t" style="left:436px;top:560.1px;font-size:12px;line-height:14.4px;color:#365899;font-weight:bold;">JasperOnDemand</div>
<div class="t" style="left:436px;top:574.7px;font-size:11px;line-height:13.2px;color:#90949c;font-weight:normal;">Page ID: 9081828717</div>
<div class="t" style="left:615px;top:560.1px;font-size:12px;line-height:14.4px;color:#2f333b;font-weight:bold;">12</div>
<svg style="left:640.4px;top:564.3px" width="7" height="5"><path d="M0 5h7l-3.500-5z" fill="#42b72a"/></svg>
<div class="t" style="left:652.4px;top:560.4px;font-size:11.5px;line-height:13.8px;color:#42b72a;font-weight:bold;">22%</div>
<div class="t" style="left:615px;top:574.7px;font-size:11px;line-height:13.2px;color:#90949c;font-weight:normal;">New Likes</div>
<div class="t" style="left:736px;top:560.1px;font-size:12px;line-height:14.4px;color:#2f333b;font-weight:bold;">63,362</div>
<svg style="left:784.4px;top:564.3px" width="7" height="5"><path d="M0 5h7l-3.500-5z" fill="#42b72a"/></svg>
<div class="t" style="left:796.4px;top:560.4px;font-size:11.5px;line-height:13.8px;color:#42b72a;font-weight:bold;">17%</div>
<div class="t" style="left:736px;top:574.7px;font-size:11px;line-height:13.2px;color:#90949c;font-weight:normal;">Post Reach</div>
<div class="t" style="left:880px;top:560.1px;font-size:12px;line-height:14.4px;color:#2f333b;font-weight:bold;">1,241</div>
<svg style="left:922.0px;top:564.3px" width="7" height="5"><path d="M0 5h7l-3.500-5z" fill="#42b72a"/></svg>
<div class="t" style="left:934.0px;top:560.4px;font-size:11.5px;line-height:13.8px;color:#42b72a;font-weight:bold;">17%</div>
<div class="t" style="left:880px;top:574.7px;font-size:11px;line-height:13.2px;color:#90949c;font-weight:normal;">Engagement</div>
<div class="t" style="left:996px;top:561.0px;font-size:20px;line-height:24px;color:#3b3f46;font-family:'DejaVu Sans',sans-serif">★</div>
<div class="abs" style="left:358px;top:604.6px;width:672px;height:26.8px;background:#f9fafb;border-top:1px solid #e5e6e9"></div>
<div class="t" style="left:365.5px;top:613.8px;font-size:11px;line-height:13.2px;color:#90949c;font-weight:normal;">Last updated 12 minutes ago</div>
<div class="card" style="left:357px;top:643.4px;width:674px;height:380.9px"></div>
<div class="t" style="left:370px;top:661.5px;font-size:14px;line-height:16.8px;color:#1d2129;font-weight:bold;">Top Ad Accounts</div>
<div class="abs" style="left:501px;top:658.4px;width:1px;height:23px;background:#dddfe2"></div>
<div class="t" style="left:513px;top:661.5px;font-size:14px;line-height:16.8px;color:#4b4f56;font-weight:normal;">All Ad Accounts</div>
<div class="abs" style="left:370px;top:690.0px;width:113.5px;height:4px;background:#4267b2"></div>
<div class="abs" style="left:672.5px;top:656.4px;width:195.5px;height:27.5px;background:#fff;border:1px solid #ccd0d5;border-radius:3px"></div>
<div class="t" style="left:682px;top:662.7px;font-size:12px;line-height:14.4px;color:#90949c;font-weight:normal;">Search All Ad Accounts</div>
<svg style="left:847px;top:663.4px" width="15" height="15" viewBox="0 0 15 15"><circle cx="6" cy="6" r="4.800" fill="none" stroke="#7f8490" stroke-width="1.5"/><path d="M9.600 9.600l4.400 4.400" stroke="#7f8490" stroke-width="1.8" stroke-linecap="round"/></svg>
<div class="abs" style="left:876px;top:656.4px;width:136px;height:27.5px;background:#f6f7f9;border:1px solid #ccd0d5;border-radius:3px"></div>
<div class="t" style="left:888px;top:663.2px;font-size:12px;line-height:14.4px;color:#1d2129;font-weight:bold;letter-spacing:-0.1px">Last 7 Days</div>
<svg style="left:991px;top:668.9px" width="9" height="4.500"><path d="M0 0h9l-4.500 4.500z" fill="#1d2129"/></svg>
<div class="abs" style="left:358px;top:694.0px;width:672px;height:1px;background:#e5e6e9"></div>
<svg style="left:374.5px;top:717.5px" width="9" height="14"><path d="M1.200 1l6.300 6-6.300 6" fill="none" stroke="#4267b2" stroke-width="2.2"/></svg>
<div class="abs" style="left:400px;top:710.5px;width:28px;height:28px;background:#4080ff;border-radius:2px"></div>
<div class="t" style="left:406px;top:714.7px;font-size:18px;line-height:21.6px;color:#fff;font-weight:bold;">$</div>
<div class="abs" style="left:418px;top:720px;width:5px;height:2px;background:#d3dfff"></div>
<div class="abs" style="left:418px;top:724px;width:5px;height:2px;background:#d3dfff"></div>
<div class="abs" style="left:418px;top:728px;width:5px;height:2px;background:#d3dfff"></div>
<div class="t" style="left:436px;top:711.8px;font-size:12px;line-height:14.4px;color:#365899;font-weight:bold;">West Coast Ad Account</div>
<div class="t" style="left:436px;top:726.4px;font-size:11px;line-height:13.2px;color:#90949c;font-weight:normal;">Account ID: 9081828717</div>
<div class="t" style="right:641px;top:710.3px;font-size:27px;line-height:32.4px;color:#5a5f68;font-weight:normal;letter-spacing:-0.8px">12</div>
<div class="t" style="left:808px;top:712.9px;font-size:11px;line-height:13.2px;color:#90949c;font-weight:normal;">Active</div>
<div class="t" style="left:808px;top:726.9px;font-size:11px;line-height:13.2px;color:#90949c;font-weight:normal;">Campaigns</div>
<div class="t" style="left:896px;top:711.8px;font-size:12px;line-height:14.4px;color:#1d2129;font-weight:bold;">$23,955</div>
<div class="t" style="left:896px;top:726.9px;font-size:11px;line-height:13.2px;color:#90949c;font-weight:normal;">7 Day Spend</div>
<div class="t" style="left:996px;top:711.5px;font-size:20px;line-height:24px;color:#3b3f46;font-family:'DejaVu Sans',sans-serif">★</div>
<div class="abs" style="left:358px;top:754.5px;width:672px;height:1px;background:#e5e6e9"></div>
<svg style="left:374.5px;top:778.0px" width="9" height="14"><path d="M1.200 1l6.300 6-6.300 6" fill="none" stroke="#4267b2" stroke-width="2.2"/></svg>
<div class="abs" style="left:400px;top:771.0px;width:28px;height:28px;background:#4080ff;border-radius:2px"></div>
<div class="t" style="left:406px;top:775.2px;font-size:18px;line-height:21.6px;color:#fff;font-weight:bold;">$</div>
<div class="abs" style="left:418px;top:780px;width:5px;height:2px;background:#d3dfff"></div>
<div class="abs" style="left:418px;top:784px;width:5px;height:2px;background:#d3dfff"></div>
<div class="abs" style="left:418px;top:788px;width:5px;height:2px;background:#d3dfff"></div>
<div class="t" style="left:436px;top:772.3px;font-size:12px;line-height:14.4px;color:#365899;font-weight:bold;">East Coast Ad Account</div>
<div class="t" style="left:436px;top:786.9px;font-size:11px;line-height:13.2px;color:#90949c;font-weight:normal;">Account ID: 9081828717</div>
<div class="t" style="right:641px;top:770.8px;font-size:27px;line-height:32.4px;color:#5a5f68;font-weight:normal;letter-spacing:-0.8px">7</div>
<div class="t" style="left:808px;top:773.4px;font-size:11px;line-height:13.2px;color:#90949c;font-weight:normal;">Active</div>
<div class="t" style="left:808px;top:787.4px;font-size:11px;line-height:13.2px;color:#90949c;font-weight:normal;">Campaigns</div>
<div class="t" style="left:896px;top:772.3px;font-size:12px;line-height:14.4px;color:#1d2129;font-weight:bold;">$58,583</div>
<div class="t" style="left:896px;top:787.4px;font-size:11px;line-height:13.2px;color:#90949c;font-weight:normal;">7 Day Spend</div>
<div class="t" style="left:996px;top:772.0px;font-size:20px;line-height:24px;color:#3b3f46;font-family:'DejaVu Sans',sans-serif">★</div>
<div class="abs" style="left:358px;top:815.0px;width:672px;height:1px;background:#e5e6e9"></div>
<svg style="left:374.5px;top:838.5px" width="9" height="14"><path d="M1.200 1l6.300 6-6.300 6" fill="none" stroke="#4267b2" stroke-width="2.2"/></svg>
<div class="abs" style="left:400px;top:831.5px;width:28px;height:28px;background:#4080ff;border-radius:2px"></div>
<div class="t" style="left:406px;top:835.7px;font-size:18px;line-height:21.6px;color:#fff;font-weight:bold;">$</div>
<div class="abs" style="left:418px;top:842px;width:5px;height:2px;background:#d3dfff"></div>
<div class="abs" style="left:418px;top:846px;width:5px;height:2px;background:#d3dfff"></div>
<div class="abs" style="left:418px;top:850px;width:5px;height:2px;background:#d3dfff"></div>
<div class="t" style="left:436px;top:832.8px;font-size:12px;line-height:14.4px;color:#365899;font-weight:bold;">LATAM</div>
<div class="t" style="left:436px;top:847.4px;font-size:11px;line-height:13.2px;color:#90949c;font-weight:normal;">Account ID: 9081828717</div>
<div class="t" style="right:641px;top:831.3px;font-size:27px;line-height:32.4px;color:#5a5f68;font-weight:normal;letter-spacing:-0.8px">0</div>
<div class="t" style="left:808px;top:833.9px;font-size:11px;line-height:13.2px;color:#90949c;font-weight:normal;">Active</div>
<div class="t" style="left:808px;top:847.9px;font-size:11px;line-height:13.2px;color:#90949c;font-weight:normal;">Campaigns</div>
<div class="t" style="left:896px;top:832.8px;font-size:12px;line-height:14.4px;color:#1d2129;font-weight:bold;">$23,955</div>
<div class="t" style="left:896px;top:847.9px;font-size:11px;line-height:13.2px;color:#90949c;font-weight:normal;">7 Day Spend</div>
<div class="t" style="left:996px;top:832.5px;font-size:20px;line-height:24px;color:#3b3f46;font-family:'DejaVu Sans',sans-serif">★</div>
<div class="abs" style="left:358px;top:875.5px;width:672px;height:1px;background:#e5e6e9"></div>
<svg style="left:374.5px;top:899.0px" width="9" height="14"><path d="M1.200 1l6.300 6-6.300 6" fill="none" stroke="#4267b2" stroke-width="2.2"/></svg>
<div class="abs" style="left:400px;top:892.0px;width:28px;height:28px;background:#4080ff;border-radius:2px"></div>
<div class="t" style="left:406px;top:896.2px;font-size:18px;line-height:21.6px;color:#fff;font-weight:bold;">$</div>
<div class="abs" style="left:418px;top:902px;width:5px;height:2px;background:#d3dfff"></div>
<div class="abs" style="left:418px;top:906px;width:5px;height:2px;background:#d3dfff"></div>
<div class="abs" style="left:418px;top:910px;width:5px;height:2px;background:#d3dfff"></div>
<div class="t" style="left:436px;top:893.3px;font-size:12px;line-height:14.4px;color:#365899;font-weight:bold;">West Coast Ad Account</div>
<div class="t" style="left:436px;top:907.9px;font-size:11px;line-height:13.2px;color:#90949c;font-weight:normal;">Account ID: 9081828717</div>
<div class="t" style="right:641px;top:891.8px;font-size:27px;line-height:32.4px;color:#5a5f68;font-weight:normal;letter-spacing:-0.8px">2</div>
<div class="t" style="left:808px;top:894.4px;font-size:11px;line-height:13.2px;color:#90949c;font-weight:normal;">Active</div>
<div class="t" style="left:808px;top:908.4px;font-size:11px;line-height:13.2px;color:#90949c;font-weight:normal;">Campaigns</div>
<div class="t" style="left:896px;top:893.3px;font-size:12px;line-height:14.4px;color:#1d2129;font-weight:bold;">$23,595</div>
<div class="t" style="left:896px;top:908.4px;font-size:11px;line-height:13.2px;color:#90949c;font-weight:normal;">7 Day Spend</div>
<div class="t" style="left:996px;top:893.0px;font-size:20px;line-height:24px;color:#3b3f46;font-family:'DejaVu Sans',sans-serif">★</div>
<div class="abs" style="left:358px;top:936.0px;width:672px;height:1px;background:#e5e6e9"></div>
<svg style="left:374.5px;top:959.5px" width="9" height="14"><path d="M1.200 1l6.300 6-6.300 6" fill="none" stroke="#4267b2" stroke-width="2.2"/></svg>
<div class="abs" style="left:400px;top:952.5px;width:28px;height:28px;background:#4080ff;border-radius:2px"></div>
<div class="t" style="left:406px;top:956.7px;font-size:18px;line-height:21.6px;color:#fff;font-weight:bold;">$</div>
<div class="abs" style="left:418px;top:962px;width:5px;height:2px;background:#d3dfff"></div>
<div class="abs" style="left:418px;top:966px;width:5px;height:2px;background:#d3dfff"></div>
<div class="abs" style="left:418px;top:970px;width:5px;height:2px;background:#d3dfff"></div>
<div class="t" style="left:436px;top:953.8px;font-size:12px;line-height:14.4px;color:#365899;font-weight:bold;">EMEA Specialized</div>
<div class="t" style="left:436px;top:968.4px;font-size:11px;line-height:13.2px;color:#90949c;font-weight:normal;">Account ID: 9081828717</div>
<div class="t" style="right:641px;top:952.3px;font-size:27px;line-height:32.4px;color:#5a5f68;font-weight:normal;letter-spacing:-0.8px">8</div>
<div class="t" style="left:808px;top:954.9px;font-size:11px;line-height:13.2px;color:#90949c;font-weight:normal;">Active</div>
<div class="t" style="left:808px;top:968.9px;font-size:11px;line-height:13.2px;color:#90949c;font-weight:normal;">Campaigns</div>
<div class="t" style="left:896px;top:953.8px;font-size:12px;line-height:14.4px;color:#1d2129;font-weight:bold;">$23,955</div>
<div class="t" style="left:896px;top:968.9px;font-size:11px;line-height:13.2px;color:#90949c;font-weight:normal;">7 Day Spend</div>
<div class="t" style="left:996px;top:953.5px;font-size:20px;line-height:24px;color:#3b3f46;font-family:'DejaVu Sans',sans-serif">★</div>
<div class="abs" style="left:358px;top:996.5px;width:672px;height:26.8px;background:#f9fafb;border-top:1px solid #e5e6e9"></div>
<div class="t" style="left:365.5px;top:1005.7px;font-size:11px;line-height:13.2px;color:#90949c;font-weight:normal;">Last updated 12 minutes ago</div>
<div class="t" style="left:358px;top:1059.8px;font-size:12px;line-height:14.4px;color:#1d2129;font-weight:bold;">Don't see something you expected to see?</div>
<div class="t" style="left:358px;top:1078.8px;font-size:12px;line-height:14.4px;color:#90949c;font-weight:normal;">We're continuing to work on Business Home so it shows the most relevant information for you. If you'd like to see something</div>
<div class="t" style="left:358px;top:1095.8px;font-size:12px;line-height:14.4px;color:#90949c;font-weight:normal;">else here, <span style="color:#365899">please let us know</span>!</div>
</div></body></html>
